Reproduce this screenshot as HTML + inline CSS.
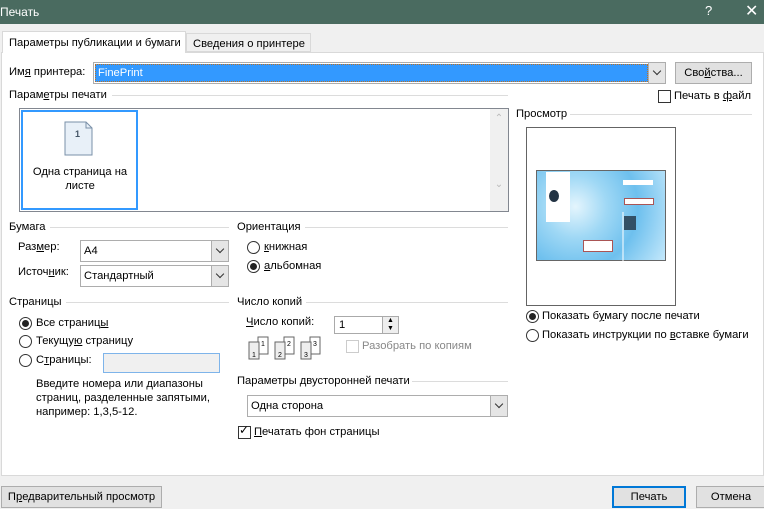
<!DOCTYPE html><html><head><meta charset="utf-8"><style>
*{box-sizing:border-box;margin:0;padding:0}
body{width:764px;height:509px;background:#f0f0f0;font-family:"Liberation Sans",sans-serif;font-size:11.2px;color:#000;position:relative;overflow:hidden}
.a{position:absolute;white-space:nowrap}
.ln{position:absolute;height:1px;background:#dcdcdc}
.cb{position:absolute;background:#fff;border:1px solid #adadad}
.dd{position:absolute;top:0;right:0;bottom:0;width:17px;background:#e5e5e5;border-left:1px solid #adadad}
.dd:after{content:"";position:absolute;left:5px;top:5px;width:5px;height:5px;border-right:1px solid #333;border-bottom:1px solid #333;transform:rotate(45deg)}
.rb{position:absolute;width:13px;height:13px;border:1px solid #333;border-radius:50%;background:#fff}
.rb.on:after{content:"";position:absolute;left:2px;top:2px;width:7px;height:7px;border-radius:50%;background:#222}
.ck{position:absolute;width:13px;height:13px;border:1px solid #333;background:#fff}
.btn{position:absolute;background:#e1e1e1;border:1px solid #adadad;text-align:center;line-height:20px}
u{text-decoration:underline}
</style></head><body>
<div class="a" style="left:0;top:0;width:764px;height:24px;background:#4a6b60;color:#fff"></div>
<div class="a" style="left:0;top:5px;color:#fff;font-size:12px">Печать</div>
<div class="a" style="left:705px;top:3px;color:#fff;font-size:13px">?</div>
<div class="a" style="left:745px;top:1px;color:#fff;font-size:16px">✕</div>
<div class="a" style="left:1px;top:52px;width:763px;height:424px;background:#fff;border:1px solid #d9d9d9"></div>
<div class="a" style="left:2px;top:31px;width:184px;height:22px;background:#fff;border:1px solid #d9d9d9;border-bottom:none"></div>
<div class="a" style="left:9px;top:37px">Параметры публикации и бумаги</div>
<div class="a" style="left:186px;top:33px;width:125px;height:19px;background:#f0f0f0;border:1px solid #d9d9d9"></div>
<div class="a" style="left:193px;top:38px">Сведения о принтере</div>
<div class="a" style="left:9px;top:66px">Им<u>я</u> принтера:</div>
<div class="cb" style="left:93px;top:62px;width:573px;height:22px">
<div class="a" style="left:1px;top:1px;width:553px;height:18px;background:#3399ff;border:1px dotted #c07020;color:#fff;padding-left:2px;line-height:16px">FinePrint</div>
<div class="dd"></div></div>
<div class="btn" style="left:675px;top:62px;width:77px;height:22px">Сво<u>й</u>ства...</div>
<div class="a" style="left:9px;top:89px">Парам<u>е</u>тры печати</div>
<div class="ln" style="left:112px;top:95px;width:396px"></div>
<div class="ck" style="left:658px;top:90px"></div>
<div class="a" style="left:674px;top:90px">Печать в <u>ф</u>айл</div>
<div class="cb" style="left:19px;top:108px;width:490px;height:104px;border-color:#828790"></div>
<div class="a" style="left:490px;top:109px;width:18px;height:102px;background:#f0f0f0;color:#bbb;font-size:10px;text-align:center;padding-top:4px">⌃<br><br><br><br><br><br>⌄</div>
<div class="a" style="left:21px;top:110px;width:117px;height:100px;border:2px solid #3399ff"></div>
<svg class="a" style="left:64px;top:121px" width="30" height="36"><path d="M1 1H22L28 7V34H1Z" fill="#e8f0f8" stroke="#7a90a8"/><path d="M22 1V7H28" fill="none" stroke="#7a90a8"/><text x="11" y="16" font-size="9" font-weight="bold" fill="#456" font-family="Liberation Sans">1</text></svg>
<div class="a" style="left:28px;top:165px;width:104px;text-align:center;white-space:normal;line-height:14px">Одна страница на листе</div>
<div class="a" style="left:516px;top:108px">Просмотр</div>
<div class="ln" style="left:570px;top:114px;width:182px"></div>
<div class="a" style="left:526px;top:127px;width:150px;height:179px;background:#fff;border:1px solid #646464"></div>
<div class="a" style="left:536px;top:170px;width:130px;height:91px;border:1px solid #666;background:radial-gradient(circle at 30% 40%,#e4f5fd 0,#9fd8f5 30%,#6ec0ee 60%,#c4e8fb 100%)"></div>
<div class="a" style="left:546px;top:172px;width:24px;height:50px;background:#fff"></div>
<div class="a" style="left:549px;top:190px;width:10px;height:12px;background:#234;border-radius:50%"></div>
<div class="a" style="left:622px;top:212px;width:2px;height:50px;background:#fff;opacity:.5"></div>
<div class="a" style="left:623px;top:180px;width:30px;height:5px;background:#fff"></div>
<div class="a" style="left:624px;top:198px;width:30px;height:7px;background:#fff;border:1px solid #a55"></div>
<div class="a" style="left:624px;top:216px;width:12px;height:14px;background:#234;opacity:.8"></div>
<div class="a" style="left:583px;top:240px;width:30px;height:12px;background:#fff;border:1px solid #a55"></div>
<div class="rb on" style="left:526px;top:310px"></div>
<div class="a" style="left:542px;top:310px">Показать б<u>у</u>магу после печати</div>
<div class="rb" style="left:526px;top:329px"></div>
<div class="a" style="left:542px;top:329px">Показать инструкции по <u>в</u>ставке бумаги</div>
<div class="a" style="left:9px;top:221px">Бумага</div>
<div class="ln" style="left:50px;top:227px;width:179px"></div>
<div class="a" style="left:18px;top:241px">Раз<u>м</u>ер:</div>
<div class="cb" style="left:80px;top:240px;width:149px;height:22px"><div class="a" style="left:3px;top:4px">A4</div><div class="dd"></div></div>
<div class="a" style="left:18px;top:266px">Источ<u>н</u>ик:</div>
<div class="cb" style="left:80px;top:265px;width:149px;height:22px"><div class="a" style="left:3px;top:4px">Стандартный</div><div class="dd"></div></div>
<div class="a" style="left:237px;top:221px">Ориентация</div>
<div class="ln" style="left:305px;top:227px;width:203px"></div>
<div class="rb" style="left:247px;top:241px"></div><div class="a" style="left:264px;top:241px"><u>к</u>нижная</div>
<div class="rb on" style="left:247px;top:260px"></div><div class="a" style="left:264px;top:260px"><u>а</u>льбомная</div>
<div class="a" style="left:9px;top:296px">Страницы</div>
<div class="ln" style="left:66px;top:302px;width:163px"></div>
<div class="rb on" style="left:19px;top:317px"></div><div class="a" style="left:36px;top:317px">Все страниц<u>ы</u></div>
<div class="rb" style="left:19px;top:335px"></div><div class="a" style="left:36px;top:335px">Текущу<u>ю</u> страницу</div>
<div class="rb" style="left:19px;top:354px"></div><div class="a" style="left:36px;top:354px">С<u>т</u>раницы:</div>
<div class="a" style="left:103px;top:353px;width:117px;height:20px;background:#f0f0f0;border:1px solid #7eb4ea"></div>
<div class="a" style="left:36px;top:377px;line-height:14px">Введите номера или диапазоны<br>страниц, разделенные запятыми,<br>например: 1,3,5-12.</div>
<div class="a" style="left:237px;top:296px">Число копий</div>
<div class="ln" style="left:306px;top:302px;width:202px"></div>
<div class="a" style="left:246px;top:316px"><u>Ч</u>исло копий:</div>
<div class="cb" style="left:334px;top:316px;width:65px;height:18px;border-color:#aaa"><div class="a" style="left:4px;top:2px">1</div><div class="a" style="right:0;top:0;width:16px;height:16px;background:#eee;border-left:1px solid #aaa;font-size:7px;text-align:center;line-height:8px">▲<br>▼</div></div>
<svg class="a" style="left:248px;top:335px" width="80" height="28" font-family="Liberation Sans" font-size="7"><g fill="#fff" stroke="#666"><rect x="10" y="2" width="10" height="17"/><rect x="1" y="7" width="10" height="17" fill="#eee"/><rect x="36" y="2" width="10" height="17"/><rect x="27" y="7" width="10" height="17" fill="#eee"/><rect x="62" y="2" width="10" height="17"/><rect x="53" y="7" width="10" height="17" fill="#eee"/></g><g fill="#000"><text x="13" y="11">1</text><text x="4" y="22">1</text><text x="39" y="11">2</text><text x="30" y="22">2</text><text x="65" y="11">3</text><text x="56" y="22">3</text></g></svg>
<div class="ck" style="left:346px;top:340px;border-color:#ccc"></div>
<div class="a" style="left:362px;top:340px;color:#888">Разобрать по копиям</div>
<div class="a" style="left:237px;top:375px">Параметры <u>д</u>вусторонней печати</div>
<div class="ln" style="left:412px;top:381px;width:96px"></div>
<div class="cb" style="left:247px;top:395px;width:261px;height:22px"><div class="a" style="left:3px;top:4px">Одна сторона</div><div class="dd"></div></div>
<div class="ck" style="left:238px;top:426px"></div>
<div class="a" style="left:239px;top:423px;font-size:12px">✓</div>
<div class="a" style="left:254px;top:426px"><u>П</u>ечатать фон страницы</div>
<div class="btn" style="left:1px;top:486px;width:161px;height:22px">П<u>р</u>едварительный просмотр</div>
<div class="btn" style="left:612px;top:486px;width:74px;height:22px;border:2px solid #0078d7;line-height:18px">Печать</div>
<div class="btn" style="left:696px;top:486px;width:70px;height:22px">Отмена</div>
</body></html>
